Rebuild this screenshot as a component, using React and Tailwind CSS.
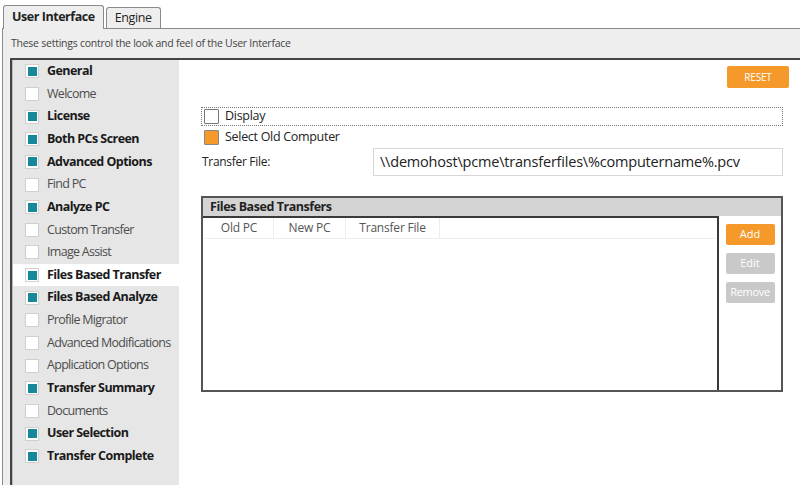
import React from "react";

const pages = [
  { name: "General", on: true },
  { name: "Welcome", on: false },
  { name: "License", on: true },
  { name: "Both PCs Screen", on: true },
  { name: "Advanced Options", on: true },
  { name: "Find PC", on: false },
  { name: "Analyze PC", on: true },
  { name: "Custom Transfer", on: false },
  { name: "Image Assist", on: false },
  { name: "Files Based Transfer", on: true, selected: true },
  { name: "Files Based Analyze", on: true },
  { name: "Profile Migrator", on: false },
  { name: "Advanced Modifications", on: false },
  { name: "Application Options", on: false },
  { name: "Transfer Summary", on: true },
  { name: "Documents", on: false },
  { name: "User Selection", on: true },
  { name: "Transfer Complete", on: true },
];

function PageRow({ page }) {
  return (
    <div className={`flex items-center h-[22.65px] pl-[12px] ${page.selected ? "bg-white" : ""}`}>
      <div className="w-[14px] h-[14px] bg-white border border-[#d0d0d0] flex items-center justify-center">
        {page.on && <div className="w-[9px] h-[9px] bg-[#17879a]" />}
      </div>
      <span
        className={`ml-[8px] text-[12.5px] leading-none whitespace-nowrap ${
          page.on ? "font-bold text-[#1a1a1a] tracking-[-0.55px]" : "text-[#4d4d4d] tracking-[-0.7px]"
        }`}
      >
        {page.name}
      </span>
    </div>
  );
}

export default function App() {
  return (
    <div className="w-[800px] h-[485px] bg-white overflow-hidden font-['Open_Sans',sans-serif] text-[#222]">
      {/* tabs */}
      <div className="flex items-end h-[28px] pl-[3px] gap-[2px]">
        <div className="h-[24px] px-[8px] flex items-center bg-[#eeeeee] border border-b-0 border-[#8a8a8a] rounded-t-[3px] text-[12.5px] font-bold tracking-[-0.45px] relative top-[1px]">
          User Interface
        </div>
        <div className="h-[21px] px-[8px] flex items-center bg-[#eeeeee] border border-b-0 border-[#8a8a8a] rounded-t-[3px] text-[12.5px] tracking-[-0.4px]">
          Engine
        </div>
      </div>
      <div className="border-t border-l border-[#8a8a8a] ml-[2px] bg-[#eeeeee] h-[457px] flex flex-col">
        <div className="h-[29px] flex items-center pl-[8px] text-[10.5px] tracking-[-0.25px] text-[#444]">
          These settings control the look and feel of the User Interface
        </div>
        <div className="flex-1 ml-[7px] border-t-2 border-l-2 border-[#444] flex bg-white">
          <div className="w-[167px] bg-[#e6e6e6] border-l border-[#bbb]">
            {pages.map((p) => (
              <PageRow key={p.name} page={p} />
            ))}
          </div>
          <div className="flex-1 pl-[22px] pr-[17px] pt-[6px]">
            <div className="flex justify-end -mr-[6px]">
              <button className="w-[62px] h-[22px] bg-[#f5992b] text-white text-[10px] tracking-[-0.2px] rounded-[2px]">RESET</button>
            </div>
            <div className="mt-[19px] h-[19px] border border-dotted border-[#777] flex items-center pl-[2px]">
              <div className="w-[15px] h-[15px] border border-[#777] bg-white rounded-[1px]" />
              <span className="ml-[6px] text-[12.5px] tracking-[-0.3px]">Display</span>
            </div>
            <div className="mt-[2px] h-[19px] flex items-center pl-[3px]">
              <div className="w-[15px] h-[15px] border border-[#888] bg-[#f5992b] rounded-[1px]" />
              <span className="ml-[6px] text-[12.5px] tracking-[-0.3px]">Select Old Computer</span>
            </div>
            <div className="mt-[1px] flex items-center">
              <span className="w-[172px] text-[12px] tracking-[-0.3px] pl-[1px]">Transfer File:</span>
              <div className="flex-1 h-[28px] border border-[#d6d6d6] flex items-center pl-[6px] text-[14.5px] tracking-[-0.2px]">
                \\demohost\pcme\transferfiles\%computername%.pcv
              </div>
            </div>
            <div className="mt-[20px] h-[196px] border-2 border-[#555] flex flex-col">
              <div className="h-[18px] bg-[#d4d4d4] flex items-center pl-[7px] text-[12.5px] font-bold tracking-[-0.45px]">
                Files Based Transfers
              </div>
              <div className="flex flex-1">
                <div className="w-[516px] border-t-2 border-r-2 border-[#3a3a3a] bg-white flex flex-col">
                  <div className="h-[21px] flex text-[12px] tracking-[-0.2px] text-[#555] border-b border-[#eee] mx-[2px]">
                    <div className="w-[69px] flex items-center justify-center border-r border-[#eee]">Old PC</div>
                    <div className="w-[72px] flex items-center justify-center border-r border-[#eee]">New PC</div>
                    <div className="w-[94px] flex items-center justify-center border-r border-[#eee]">Transfer File</div>
                  </div>
                </div>
                <div className="flex-1 flex flex-col items-center pt-[8px] gap-[8px] bg-white">
                  <button className="w-[49px] h-[21px] bg-[#f5992b] text-white text-[11px] rounded-[2px]">Add</button>
                  <button className="w-[49px] h-[21px] bg-[#c9c9c9] text-white text-[11px] rounded-[2px]">Edit</button>
                  <button className="w-[49px] h-[21px] bg-[#c9c9c9] text-white text-[11px] tracking-[-0.3px] rounded-[2px]">Remove</button>
                </div>
              </div>
            </div>
          </div>
        </div>
      </div>
    </div>
  );
}
